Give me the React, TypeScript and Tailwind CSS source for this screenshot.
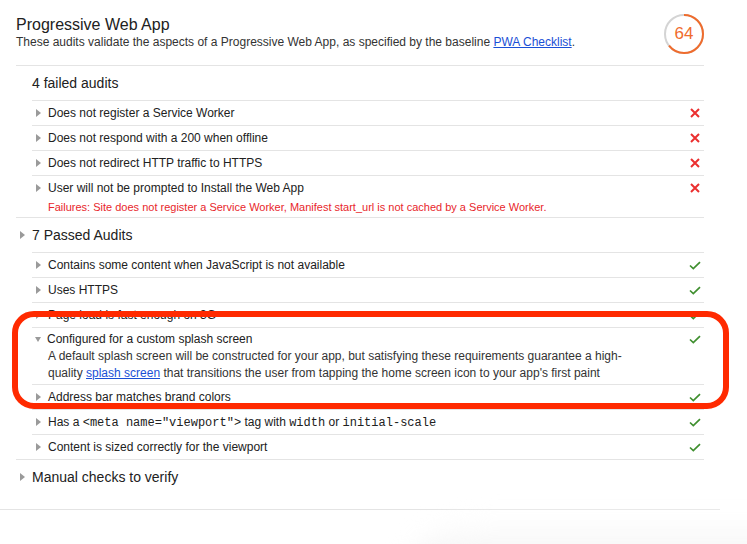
import React from "react";

const Tri = () => (
  <span className="ml-[4px] mr-[7px] inline-block w-0 h-0 border-l-[5px] border-l-[#9a9a9a] border-y-[4px] border-y-transparent" />
);
const TriDown = () => (
  <span className="ml-[3px] mr-[6px] inline-block w-0 h-0 border-t-[5px] border-t-[#9a9a9a] border-x-[3.5px] border-x-transparent" />
);

const Check = () => (
  <svg width="12" height="9" viewBox="0 0 12 9">
    <polyline points="1,4.5 4.3,7.6 11,1.2" fill="none" stroke="#3f8f2f" strokeWidth="1.7" />
  </svg>
);
const Cross = () => (
  <svg width="10" height="10" viewBox="0 0 10 10">
    <path d="M1,1 L9,9 M9,1 L1,9" stroke="#eb2f2f" strokeWidth="2" />
  </svg>
);

function Row({ children, pass }: { children: React.ReactNode; pass?: boolean }) {
  return (
    <div className="border-t border-[#e4e4e4] h-[25px] flex items-center text-[12px]">
      <Tri />
      <span className="whitespace-nowrap">{children}</span>
      <span className="ml-auto w-[18px] flex justify-center">{pass ? <Check /> : <Cross />}</span>
    </div>
  );
}

const Mono = ({ children }: { children: React.ReactNode }) => (
  <code className="font-['Liberation_Mono','Courier_New',monospace] text-[12px]">{children}</code>
);

export default function App() {
  return (
    <div className="relative w-[747px] h-[544px] bg-white overflow-hidden font-['Liberation_Sans',Arial,sans-serif] text-[#212121]">
      <div className="w-[720px] border-b border-[#e4e4e4] pb-[15px]">
        <div className="ml-4 w-[688px]">
          {/* header */}
          <div className="h-[66px] border-b border-[#e4e4e4] flex items-start justify-between pt-[15px]">
            <div>
              <div className="text-[16px] leading-[19px]">Progressive Web App</div>
              <div className="text-[12px] leading-[16px] text-[#333]">
                These audits validate the aspects of a Progressive Web App, as specified by the baseline{" "}
                <span className="text-[#1a4fd6] underline">PWA Checklist</span>.
              </div>
            </div>
            <div className="relative w-[40px] h-[40px] mt-[-1px]">
              <svg width="40" height="40" viewBox="0 0 40 40" className="absolute inset-0">
                <circle cx="20" cy="20" r="19" fill="none" stroke="#d4d4d4" strokeWidth="2" />
                <circle
                  cx="20"
                  cy="20"
                  r="19"
                  fill="none"
                  stroke="#ef6c2d"
                  strokeWidth="2"
                  strokeDasharray="76.4 200"
                  transform="rotate(-90 20 20)"
                />
              </svg>
              <div className="absolute inset-0 flex items-center justify-center text-[17px] text-[#ef6c2d]">64</div>
            </div>
          </div>

          {/* failed */}
          <div className="border-b border-[#e4e4e4]">
            <div className="h-[34px] flex items-center pl-4 text-[14px]">4 failed audits</div>
            <div className="ml-4">
              <Row>Does not register a Service Worker</Row>
              <Row>Does not respond with a 200 when offline</Row>
              <Row>Does not redirect HTTP traffic to HTTPS</Row>
              <div className="border-t border-[#e4e4e4] pb-[3px]">
                <div className="h-[24px] flex items-center text-[12px]">
                  <Tri />
                  <span>User will not be prompted to Install the Web App</span>
                  <span className="ml-auto w-[18px] flex justify-center">
                    <Cross />
                  </span>
                </div>
                <div className="pl-[16px] text-[11px] leading-[14px] text-[#e8262b]">
                  Failures: Site does not register a Service Worker, Manifest start_url is not cached by a Service Worker.
                </div>
              </div>
            </div>
          </div>

          {/* passed */}
          <div className="border-b border-[#e4e4e4]">
            <div className="h-[34px] flex items-center text-[14px]">
              <Tri />
              <span>7 Passed Audits</span>
            </div>
            <div className="ml-4">
              <Row pass>Contains some content when JavaScript is not available</Row>
              <Row pass>Uses HTTPS</Row>
              <Row pass>Page load is fast enough on 3G</Row>
              <div className="border-t border-[#e4e4e4] pb-[2px]">
                <div className="pt-[3px] leading-[17px] flex items-center text-[12px]">
                  <TriDown />
                  <span>Configured for a custom splash screen</span>
                  <span className="ml-auto w-[18px] flex justify-center">
                    <Check />
                  </span>
                </div>
                <div className="pl-[16px] text-[12px] leading-[17px] text-[#333]">
                  A default splash screen will be constructed for your app, but satisfying these requirements guarantee a high-
                  <br />
                  quality <span className="text-[#1a4fd6] underline">splash screen</span> that transitions the user from tapping
                  the home screen icon to your app's first paint
                </div>
              </div>
              <Row pass>Address bar matches brand colors</Row>
              <Row pass>
                Has a <Mono>&lt;meta name="viewport"&gt;</Mono> tag with <Mono>width</Mono> or <Mono>initial-scale</Mono>
              </Row>
              <Row pass>Content is sized correctly for the viewport</Row>
            </div>
          </div>

          {/* manual */}
          <div className="h-[34px] flex items-center text-[14px]">
            <Tri />
            <span>Manual checks to verify</span>
          </div>
        </div>
      </div>

      {/* faint shadow at bottom right */}
      <div className="absolute left-[400px] top-[520px] w-[420px] h-[80px] rounded-tl-[80px] bg-gradient-to-b from-white to-[#e9e9e9] blur-md" />

      {/* red annotation */}
      <div className="absolute left-[12px] top-[311px] w-[717px] h-[98px] border-[6px] border-[#ff2a00] rounded-[22px]" />
    </div>
  );
}
